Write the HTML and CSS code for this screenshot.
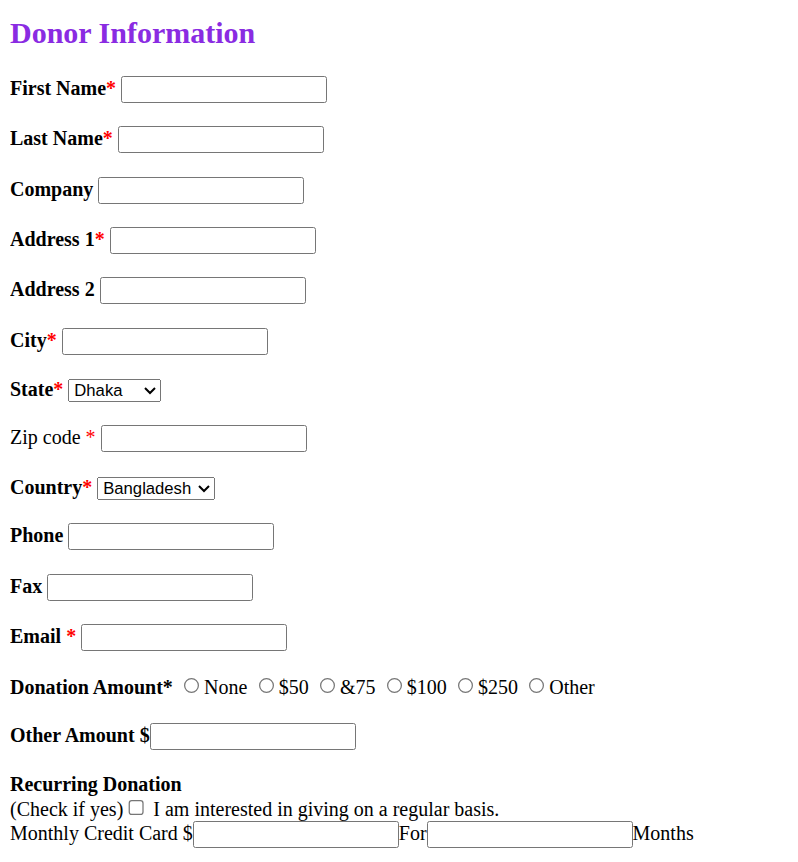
FILE: index.html
```html
<!DOCTYPE html>
<html>
<head>
<meta charset="utf-8">
<title>Donor Information</title>
<link rel="stylesheet" href="styles.css">
</head>
<body>
<h2 class="title">Donor Information</h2>
<form class="donor-form">
  <p><b>First Name<span class="req">*</span></b> <input type="text"></p>
  <p><b>Last Name<span class="req">*</span></b> <input type="text"></p>
  <p><b>Company</b> <input type="text"></p>
  <p><b>Address 1<span class="req">*</span></b> <input type="text"></p>
  <p><b>Address 2</b> <input type="text"></p>
  <p><b>City<span class="req">*</span></b> <input type="text"></p>
  <p><b>State<span class="req">*</span></b> <select class="sel-state"><option>Dhaka</option><option>Khulna</option></select></p>
  <p>Zip code <span class="req">*</span> <input type="text"></p>
  <p><b>Country<span class="req">*</span></b> <select class="sel-country"><option>Bangladesh</option></select></p>
  <p><b>Phone</b> <input type="text"></p>
  <p><b>Fax</b> <input type="text"></p>
  <p><b>Email <span class="req">*</span></b> <input type="text"></p>
  <p><b>Donation Amount*</b>
    <input type="radio" name="amt">None
    <input type="radio" name="amt">$50
    <input type="radio" name="amt">&amp;75
    <input type="radio" name="amt">$100
    <input type="radio" name="amt">$250
    <input type="radio" name="amt">Other
  </p>
  <p><b>Other Amount $</b><input type="text"></p>
  <p><b>Recurring Donation</b><br>
  (Check if yes)<input type="checkbox"> I am interested in giving on a regular basis.<br>
  Monthly Credit Card $<input type="text">For<input type="text">Months</p>
</form>
</body>
</html>
```
FILE: styles.css
```css
html {
  zoom: 1.25;
}
body {
  font-family: "Liberation Serif", "Times New Roman", serif;
  color: #000;
  background: #fff;
  margin: 0 8px 8px;
}
.title {
  color: blueviolet;
  margin: 12.7px 0 20.7px;
}
.donor-form p {
  margin: 18.7px 0;
}
.req {
  color: red;
}
input[type="text"] {
  box-sizing: border-box;
  width: 164.8px;
  height: 21.6px;
  border: 1px solid #767676;
  border-radius: 2px;
}
.sel-state {
  width: 74.4px;
}
.sel-country {
  width: 94.4px;
}
```
